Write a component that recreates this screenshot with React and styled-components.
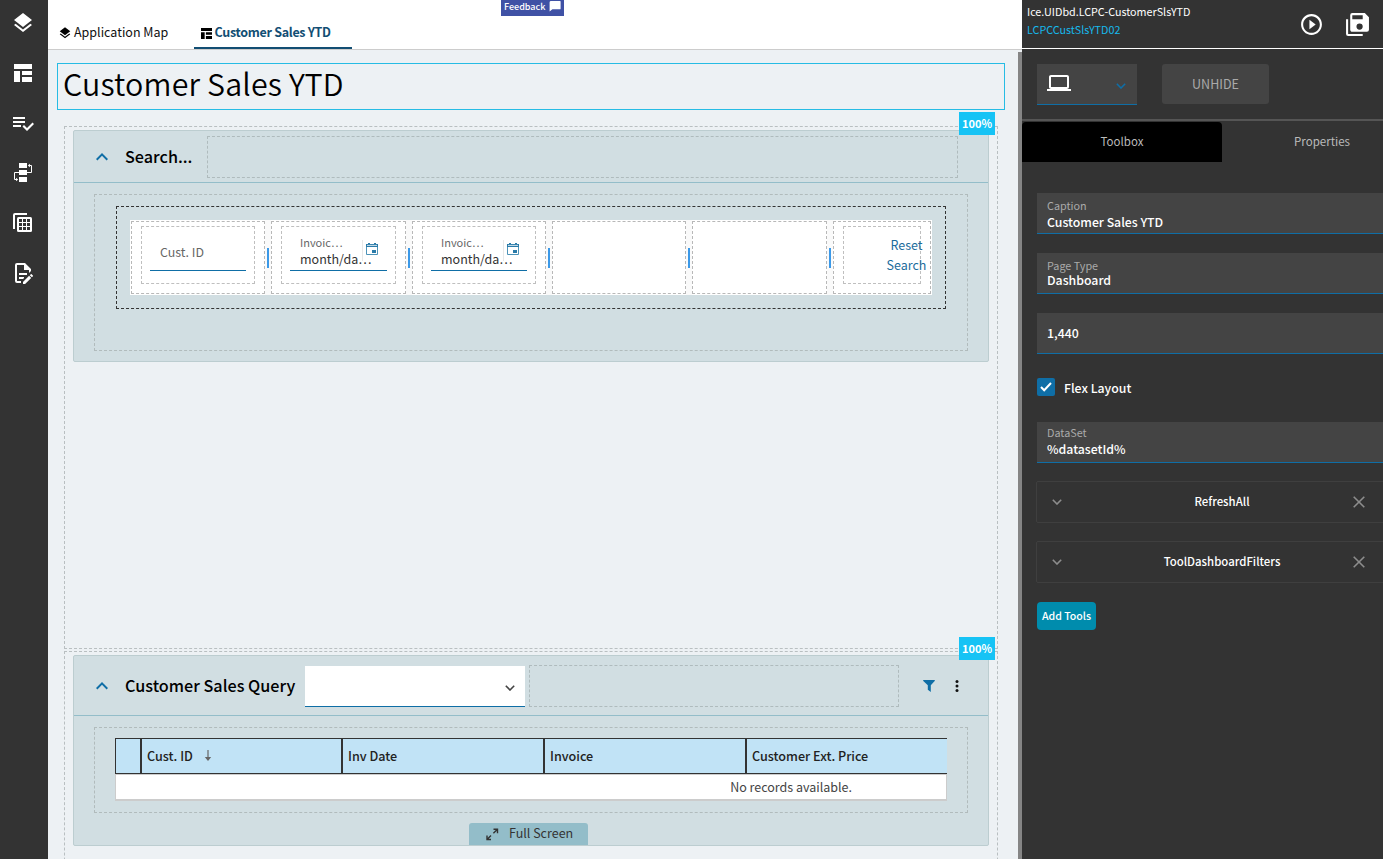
import React from 'react'
import styled, { createGlobalStyle } from 'styled-components'
import { MdLayers, MdLaptop, MdPlayCircleOutline, MdKeyboardArrowUp } from 'react-icons/md'

const tools = ['RefreshAll', 'ToolDashboardFilters'];

const columns = ['Inv Date', 'Invoice', 'Customer Ext. Price'];

const Chevron = ({ color, size = 10, stroke = 1.6 }) => (
    <svg width={size} height={size * 0.6} viewBox="0 0 10 6" fill="none">
        <path d="M.8.8 5 5 9.2.8" stroke={color} strokeWidth={stroke} />
    </svg>
);

const TemplateIcon = ({ size = 18 }) => (
    <svg width={size} height={size} viewBox="0 0 18 18" fill="currentColor">
        <path d="M0 0h18v5H0zM0 7h6v11H0zM8 7h10v4H8zM8 13h10v5H8z" />
    </svg>
);

const PlaylistIcon = () => (
    <svg width="24" height="24" viewBox="0 0 24 24" fill="currentColor">
        <path d="M14 10H2v2h12v-2m0-4H2v2h12V6M2 16h8v-2H2v2m19.5-4.5L23 13l-6.99 7-4.51-4.5L13 14l3.01 3 5.49-5.5" />
    </svg>
);

const FlowIcon = () => (
    <svg width="20" height="20" viewBox="0 0 20 20" fill="none">
        <path d="M6 0h8v5H6zM6 7h8v5H6zM6 14h8v5H6z" fill="currentColor" />
        <path d="M14 9.5h4.5v-7H16M6 9.5H1.5v7H4" stroke="currentColor" />
        <path d="M17 .7v3.6L14.8 2.5zM3 14.7v3.6l2.2-1.8z" fill="currentColor" />
    </svg>
);

const TablesIcon = () => (
    <svg width="20" height="20" viewBox="0 0 20 20" fill="none">
        <path d="M1 16V2q0-1 1-1h12" stroke="currentColor" strokeWidth="2" />
        <rect x="4" y="4" width="15" height="15" rx="1.5" fill="currentColor" />
        <path d="M6 6h3v3H6zM10 6h3v3h-3zM14 6h3v3h-3zM6 10h3v3H6zM10 10h3v3h-3zM14 10h3v3h-3zM6 14h3v3H6zM10 14h3v3h-3zM14 14h3v3h-3z" fill="#333" />
    </svg>
);

const EditDocIcon = () => (
    <svg width="24" height="24" viewBox="0 0 24 24" fill="currentColor">
        <path d="M8,12H16V14H8V12M10,20H6V4H13V9H18V12.1L20,10.1V8L14,2H6A2,2 0 0,0 4,4V20A2,2 0 0,0 6,22H10V20M8,18H12.1L13,17.1V16H8V18M20.2,13C20.3,13 20.5,13.1 20.6,13.2L21.9,14.5C22.1,14.7 22.1,15.1 21.9,15.3L20.9,16.3L18.8,14.2L19.8,13.2C19.9,13.1 20,13 20.2,13M20.2,16.9L14.1,23H12V20.9L18.1,14.8L20.2,16.9Z" />
    </svg>
);

const SaveAllIcon = () => (
    <svg width="25" height="25" viewBox="0 0 24 24" fill="currentColor">
        <path d="M17,7V3H7V7H17M14,17A3,3 0 0,0 17,14A3,3 0 0,0 14,11A3,3 0 0,0 11,14A3,3 0 0,0 14,17M19,1L23,5V17A2,2 0 0,1 21,19H7C5.89,19 5,18.1 5,17V3A2,2 0 0,1 7,1H19M1,7H3V21H17V23H3A2,2 0 0,1 1,21V7Z" />
    </svg>
);

const CalendarIcon = () => (
    <svg width="12" height="12" viewBox="0 0 12 12" fill="none">
        <path d="M.5 1.5h11v10H.5z" stroke="#4d93b8" />
        <path d="M0 1h12v3H0zM2 0h2v1H2zM8 0h2v1H8zM6 7h4v3H6z" fill="#2a7ba9" />
        <path d="M1 2.4h10" stroke="#d4e4ed" />
    </svg>
);

const CommentIcon = () => (
    <svg width="12" height="11" viewBox="0 0 12 11" fill="#fff">
        <path d="M2 0h9q.6 0 .6.6v7.1q0 .6-.6.6H3.4L.6 10.6V1.4Q.6 0 2 0z" />
    </svg>
);

const FilterIcon = () => (
    <svg width="12" height="12" viewBox="0 0 12 12" fill="#0f6ea6">
        <path d="M.4 0h11.2q.5.3.1.9L7.8 5.2V12L4.8 9.8V5.2L.3.9Q-.1.3.4 0z" />
    </svg>
);

const DotsIcon = () => (
    <svg width="4" height="12" viewBox="0 0 4 12" fill="#111">
        <circle cx="2" cy="1.6" r="1.5" />
        <circle cx="2" cy="6" r="1.5" />
        <circle cx="2" cy="10.4" r="1.5" />
    </svg>
);

const ExpandIcon = () => (
    <svg width="13" height="13" viewBox="0 0 13 13" fill="none" stroke="#333" strokeWidth="1.4">
        <path d="M7.5 1.2h4v4M11.5 1.2 7.4 5.3M1 7.5v4h4M1 11.5l4-4" />
    </svg>
);

const CloseIcon = () => (
    <svg width="12" height="12" viewBox="0 0 12 12" stroke="#8d8d8d" strokeWidth="1.6">
        <path d="m.7.7 10.6 10.6M11.3.7.7 11.3" />
    </svg>
);

const SortArrow = () => (
    <svg width="8" height="12" viewBox="0 0 8 12" fill="none">
        <path d="M4 0v9" stroke="#666" strokeWidth="1.2" />
        <path d="M.8 7h6.4L4 11z" fill="#666" />
    </svg>
);

const DateField = () => (
    <DashedBox>
        <Input>
            <DateText>
                <DateLabel>Invoic…</DateLabel>
                <DateValue>month/da…</DateValue>
            </DateText>
            <CalendarButton><CalendarIcon /></CalendarButton>
        </Input>
    </DashedBox>
);

const Field = ({ label, value, gap = 2, top = 6 }) => (
    <FieldBox $top={top}>
        {label && <FieldLabel $gap={gap}>{label}</FieldLabel>}
        <FieldValue>{value}</FieldValue>
    </FieldBox>
);

const SearchPanel = () => (
    <Section $height={523}>
        <Badge>100%</Badge>
        <Card $height={232}>
            <CardHeader $height={52}>
                <Toggle><MdKeyboardArrowUp size={24} /></Toggle>
                <CardTitle $width={82}>Search...</CardTitle>
                <DropZone $width={751} />
            </CardHeader>
            <CardBody $height={157} $top={10}>
                <FlexRow>
                    <Cells>
                        <Cell>
                            <DashedBox>
                                <Input><Placeholder>Cust. ID</Placeholder></Input>
                            </DashedBox>
                        </Cell>
                        <Splitter />
                        <Cell><DateField /></Cell>
                        <Splitter />
                        <Cell><DateField /></Cell>
                        <Splitter />
                        <Cell />
                        <Splitter />
                        <Cell />
                        <Splitter />
                        <Cell>
                            <DashedBox>
                                <Links>
                                    <a>Reset</a>
                                    <a>Search</a>
                                </Links>
                            </DashedBox>
                        </Cell>
                    </Cells>
                </FlexRow>
            </CardBody>
        </Card>
    </Section>
);

const QueryPanel = () => (
    <Section $height={260}>
        <Badge>100%</Badge>
        <Card $height={191}>
            <CardHeader $height={60}>
                <Toggle><MdKeyboardArrowUp size={24} /></Toggle>
                <CardTitle $width={180}>Customer Sales Query</CardTitle>
                <ViewSelect><Chevron color="#444" /></ViewSelect>
                <DropZone $width={370} />
                <CardActions>
                    <FilterIcon />
                    <DotsIcon />
                </CardActions>
            </CardHeader>
            <CardBody $height={86} $top={10}>
                <Table>
                    <TableHead>
                        <Th />
                        <Th>Cust. ID<SortArrow /></Th>
                        {columns.map(name => <Th key={name}>{name}</Th>)}
                    </TableHead>
                    <EmptyRow>No records available.</EmptyRow>
                </Table>
            </CardBody>
            <FullScreen><ExpandIcon />Full Screen</FullScreen>
        </Card>
    </Section>
);

const Inspector = () => (
    <Panel>
        <PanelHeader>
            <Names>
                <span>Ice.UIDbd.LCPC-CustomerSlsYTD</span>
                <Accent>LCPCCustSlsYTD02</Accent>
            </Names>
            <MdPlayCircleOutline size={25} />
            <SaveAllIcon />
        </PanelHeader>
        <DeviceRow>
            <DeviceSelect>
                <MdLaptop size={24} />
                <Chevron color="#0f6ea6" />
            </DeviceSelect>
            <Unhide>UNHIDE</Unhide>
        </DeviceRow>
        <PanelTabs>
            <PanelTab $active>Toolbox</PanelTab>
            <PanelTab>Properties</PanelTab>
        </PanelTabs>
        <Form>
            <Field label="Caption" value="Customer Sales YTD" />
            <Field label="Page Type" value="Dashboard" gap={0} />
            <Field value="1,440" top={11} />
            <CheckRow>
                <CheckBox>
                    <svg width="12" height="10" viewBox="0 0 12 10" fill="none">
                        <path d="m1 5 3.2 3.3L11 1" stroke="#fff" strokeWidth="2" />
                    </svg>
                </CheckBox>
                <span>Flex Layout</span>
            </CheckRow>
            <Field label="DataSet" value="%datasetId%" top={4} />
            {tools.map(name => (
                <Tool key={name}>
                    <Chevron color="#8d8d8d" />
                    <span>{name}</span>
                    <CloseIcon />
                </Tool>
            ))}
            <AddButton>Add Tools</AddButton>
        </Form>
    </Panel>
);

const App = () => (
    <Wrapper>
        <GlobalStyle />
        <Feedback>Feedback<CommentIcon /></Feedback>
        <Sidebar>
            <MdLayers size={24} />
            <TemplateIcon />
            <PlaylistIcon />
            <FlowIcon />
            <TablesIcon />
            <EditDocIcon />
        </Sidebar>
        <Main>
            <Tabs>
                <Tab><MdLayers size={14} />Application Map</Tab>
                <Tab $active><TemplateIcon size={11} />Customer Sales YTD</Tab>
            </Tabs>
            <Canvas>
                <Page>
                    <PageTitle>Customer Sales YTD</PageTitle>
                    <SearchPanel />
                    <QueryPanel />
                </Page>
                <ScrollBar />
            </Canvas>
        </Main>
        <Inspector />
    </Wrapper>
);

export default App

//#region StyledComponents
const GlobalStyle = createGlobalStyle`
  * {
    box-sizing: border-box;
  }
  body {
    margin: 0;
    overflow: hidden;
    font-family: "Noto Sans CJK SC", "Open Sans", sans-serif;
    font-size: 12.5px;
    line-height: 18px;
  }
  svg {
    display: block;
    flex: none;
  }
`;

const Wrapper = styled.div`
  position: relative;
  width: 1383px;
  height: 859px;
  display: flex;
  overflow: hidden;
  white-space: nowrap;
`;

const Feedback = styled.div`
  position: absolute;
  left: 501px;
  top: 0;
  width: 63px;
  height: 16px;
  padding: 0 3px 3px;
  display: flex;
  align-items: center;
  justify-content: space-between;
  background-color: #3f51a5;
  color: #fff;
  font-size: 9px;
  font-weight: 500;
`;

const Sidebar = styled.div`
  width: 48px;
  flex: none;
  display: grid;
  grid-template-rows: 48px;
  grid-auto-rows: 50px;
  align-content: start;
  place-items: center;
  padding-right: 2px;
  background-color: #333;
  color: #fff;
  > svg:first-child {
    margin-bottom: 3px;
  }
`;

const Main = styled.div`
  width: 974px;
  flex: none;
  display: flex;
  flex-direction: column;
`;

const Tabs = styled.div`
  height: 50px;
  flex: none;
  display: flex;
  align-items: flex-end;
  gap: 14px;
  background-color: #fff;
  border-bottom: 1px solid #ccc;
`;

const Tab = styled.div`
  height: 33px;
  width: ${({ $active }) => $active ? '158px' : '132px'};
  padding: ${({ $active }) => $active ? '0 0 0 6.5px' : '0 0 0 10px'};
  display: flex;
  align-items: center;
  gap: ${({ $active }) => $active ? '3px' : '2px'};
  border-bottom: 2px solid ${({ $active }) => $active ? '#124e73' : 'transparent'};
  font-weight: ${({ $active }) => $active ? 700 : 400};
  letter-spacing: ${({ $active }) => $active ? '-0.3px' : 'normal'};
  color: ${({ $active }) => $active ? '#124e73' : '#111'};
  > svg {
    color: #000;
    margin-top: 3px;
  }
`;

const Canvas = styled.div`
  flex: 1;
  min-height: 0;
  display: flex;
  justify-content: space-between;
  background-color: #edf1f4;
`;

const Page = styled.div`
  width: 957px;
  padding: 13px 0 0 9px;
`;

const ScrollBar = styled.div`
  width: 4px;
  margin-top: 2px;
  background-color: #858585;
`;

const PageTitle = styled.div`
  height: 47px;
  margin-bottom: 16px;
  padding-left: 5px;
  border: 1px solid #26bce4;
  font-size: 30.4px;
  font-weight: 350;
  letter-spacing: 0.16px;
  line-height: 39px;
  color: #000;
`;

const Section = styled.div`
  position: relative;
  width: 934px;
  height: ${({ $height }) => $height}px;
  margin: 0 0 2px 7px;
  padding: 3px 8px;
  border: 1px dashed #b9bfc1;
`;

const Badge = styled.div`
  position: absolute;
  right: 2px;
  top: -15px;
  width: 36px;
  height: 23px;
  background-color: #16c3f5;
  color: #fff;
  font-size: 11px;
  font-weight: 700;
  line-height: 23px;
  text-align: center;
`;

const Card = styled.div`
  width: 916px;
  height: ${({ $height }) => $height}px;
  display: flex;
  flex-direction: column;
  align-items: center;
  background-color: #d1dee2;
  border: 1px solid #bccdd0;
  border-radius: 2px;
`;

const CardHeader = styled.div`
  width: 100%;
  height: ${({ $height }) => $height}px;
  flex: none;
  display: flex;
  align-items: center;
  padding: 1px 0 0 16px;
  border-bottom: 1px solid #93bdc9;
`;

const Toggle = styled.div`
  width: 35px;
  color: #0f6ea6;
`;

const CardTitle = styled.div`
  width: ${({ $width }) => $width}px;
  padding-bottom: 2px;
  font-size: 16.2px;
  font-weight: 500;
  color: #000;
`;

const DropZone = styled.div`
  width: ${({ $width }) => $width}px;
  height: 42px;
  border: 1px dashed #afbbbd;
`;

const ViewSelect = styled.div`
  width: 220px;
  height: 41px;
  margin: 1px 4px 0 0;
  padding: 4px 10px 0 0;
  display: flex;
  align-items: center;
  justify-content: flex-end;
  background-color: #fff;
  border-bottom: 1px solid #0f6ea6;
`;

const CardActions = styled.div`
  display: flex;
  gap: 20px;
  padding-left: 24px;
`;

const CardBody = styled.div`
  width: 874px;
  height: ${({ $height }) => $height}px;
  flex: none;
  margin-top: 11px;
  padding: ${({ $top }) => $top}px 20px 0;
  border: 1px dashed #b1bbbc;
`;

const FlexRow = styled.div`
  width: 830px;
  height: 103px;
  margin: 1px 0 0 1px;
  padding: 13px;
  border: 1px dashed #333;
`;

const Cells = styled.div`
  width: 802px;
  height: 75px;
  padding: 1px;
  display: grid;
  grid-template-columns: 134px 6px 135px 6px 134px 6px 134px 6px 135px 6px 98px;
  background-color: #fff;
`;

const Cell = styled.div`
  height: 73px;
  padding: 4px 9px 9px;
  border: 1px dashed #b8b8b8;
`;

const Splitter = styled.div`
  margin: -1px 0;
  padding-left: 2px;
  display: flex;
  align-items: center;
  background-color: #fafafa;
  &::before {
    content: '';
    width: 2px;
    height: 20px;
    background-color: #3b99e8;
  }
`;

const DashedBox = styled.div`
  height: 58px;
  padding: 3px 8px;
  border: 1px dashed #bfbfbf;
`;

const Input = styled.div`
  height: 41px;
  display: flex;
  border-bottom: 1px solid #0f6ea6;
`;

const Placeholder = styled.span`
  padding: 13px 0 0 10px;
  font-size: 12.4px;
  color: #666;
`;

const DateText = styled.div`
  display: flex;
  flex: none;
  flex-direction: column;
  width: 72px;
  padding: 4px 0 0 10px;
`;

const DateLabel = styled.span`
  height: 16px;
  font-size: 11px;
  line-height: 16px;
  color: #666;
`;

const DateValue = styled.span`
  height: 18px;
  font-size: 12.5px;
  color: #333;
`;

const CalendarButton = styled.div`
  width: 24px;
  height: 21px;
  margin-top: 10px;
  padding: 3px 0 0 3px;
  border-left: 1px solid #e8e8e8;
`;

const Links = styled.div`
  display: flex;
  flex-direction: column;
  align-items: center;
  width: 39px;
  margin: 5px 0 0 35px;
  line-height: 20px;
  color: #1c6c9c;
`;

const Table = styled.div`
  width: 832px;
`;

const TableHead = styled.div`
  height: 36px;
  display: grid;
  grid-template-columns: 26px 201px 202px 202px 1fr;
  background-color: #c1e3f6;
  border: 1px solid #333;
  border-right: none;
`;

const Th = styled.div`
  display: flex;
  align-items: center;
  gap: 11px;
  padding-left: 5px;
  font-size: 12.6px;
  font-weight: 500;
  color: #222;
  border-right: 2px solid #333;
  &:last-child {
    border-right: none;
  }
`;

const EmptyRow = styled.div`
  height: 27px;
  padding-right: 94px;
  line-height: 24px;
  text-align: right;
  color: #444;
  background-color: #fff;
  border: 1px solid #ccc;
  border-bottom-width: 2px;
`;

const FullScreen = styled.div`
  width: 119px;
  height: 22px;
  margin: auto 5px 0 0;
  padding: 0 0 2px 17px;
  display: flex;
  align-items: center;
  gap: 10px;
  background-color: #93bdc9;
  border-radius: 3px 3px 0 0;
  color: #333;
  > svg {
    margin-top: 2px;
  }
`;

const Panel = styled.div`
  width: 400px;
  flex: none;
  background-color: #333;
  color: #fff;
`;

const PanelHeader = styled.div`
  height: 49px;
  display: flex;
  align-items: center;
  gap: 21px;
  padding-left: 5px;
  border-bottom: 1px solid #fff;
`;

const Names = styled.div`
  width: 251px;
  height: 38px;
  margin-top: -5px;
  display: flex;
  flex-direction: column;
  font-size: 10.75px;
`;

const Accent = styled.span`
  color: #16b9ec;
`;

const DeviceRow = styled.div`
  height: 72px;
  display: flex;
  gap: 25px;
  margin-bottom: 1px;
  padding: 15px 15px 0;
  border-bottom: 2px solid #555;
`;

const DeviceSelect = styled.div`
  width: 100px;
  height: 41px;
  padding: 0 11px 3px 10px;
  display: flex;
  align-items: center;
  justify-content: space-between;
  background-color: #444;
  border-bottom: 1px solid #0f6ea6;
  > svg:last-child {
    margin-top: 7px;
  }
`;

const Unhide = styled.div`
  width: 107px;
  height: 40px;
  border-radius: 3px;
  background-color: #444;
  color: #aaa;
  line-height: 40px;
  text-align: center;
`;

const PanelTabs = styled.div`
  display: flex;
`;

const PanelTab = styled.div`
  width: 200px;
  height: 40px;
  border-radius: 4px 4px 0 0;
  background-color: ${({ $active }) => $active ? '#000' : 'transparent'};
  color: #bbb;
  font-size: 11.5px;
  line-height: 38px;
  text-align: center;
`;

const Form = styled.div`
  padding: 31px 15px 0;
  display: flex;
  flex-direction: column;
  align-items: stretch;
`;

const FieldBox = styled.div`
  height: 41px;
  margin-bottom: 19px;
  padding: ${({ $top }) => $top}px 10px 0;
  background-color: #444;
  border-bottom: 1px solid #0f6ea6;
`;

const FieldLabel = styled.div`
  height: 12px;
  margin-bottom: ${({ $gap }) => $gap}px;
  font-size: 10.8px;
  line-height: 12px;
  color: #aaa;
`;

const FieldValue = styled.div`
  font-size: 12.3px;
  font-weight: 500;
`;

const CheckRow = styled.div`
  height: 18px;
  margin: 5px 0 26px;
  display: flex;
  align-items: center;
  gap: 9px;
  font-size: 12.3px;
  font-weight: 500;
  > span {
    margin-top: 2px;
  }
`;

const CheckBox = styled.div`
  width: 18px;
  height: 18px;
  display: grid;
  place-items: center;
  border-radius: 2px;
  background-color: #0f6ea6;
`;

const Tool = styled.div`
  height: 42px;
  margin: -1px -1px 19px;
  padding: 0 42px 0 15px;
  display: flex;
  align-items: center;
  border: 1px solid #3f3f3f;
  border-radius: 2px;
  font-size: 11.4px;
  font-weight: 500;
  > span {
    flex: 1;
    padding: 0 0 2px 29px;
    text-align: center;
  }
`;

const AddButton = styled.div`
  width: 59px;
  height: 28px;
  border-radius: 4px;
  background-color: #008cad;
  font-size: 10.6px;
  font-weight: 500;
  line-height: 28px;
  text-align: center;
`;
//#endregion
